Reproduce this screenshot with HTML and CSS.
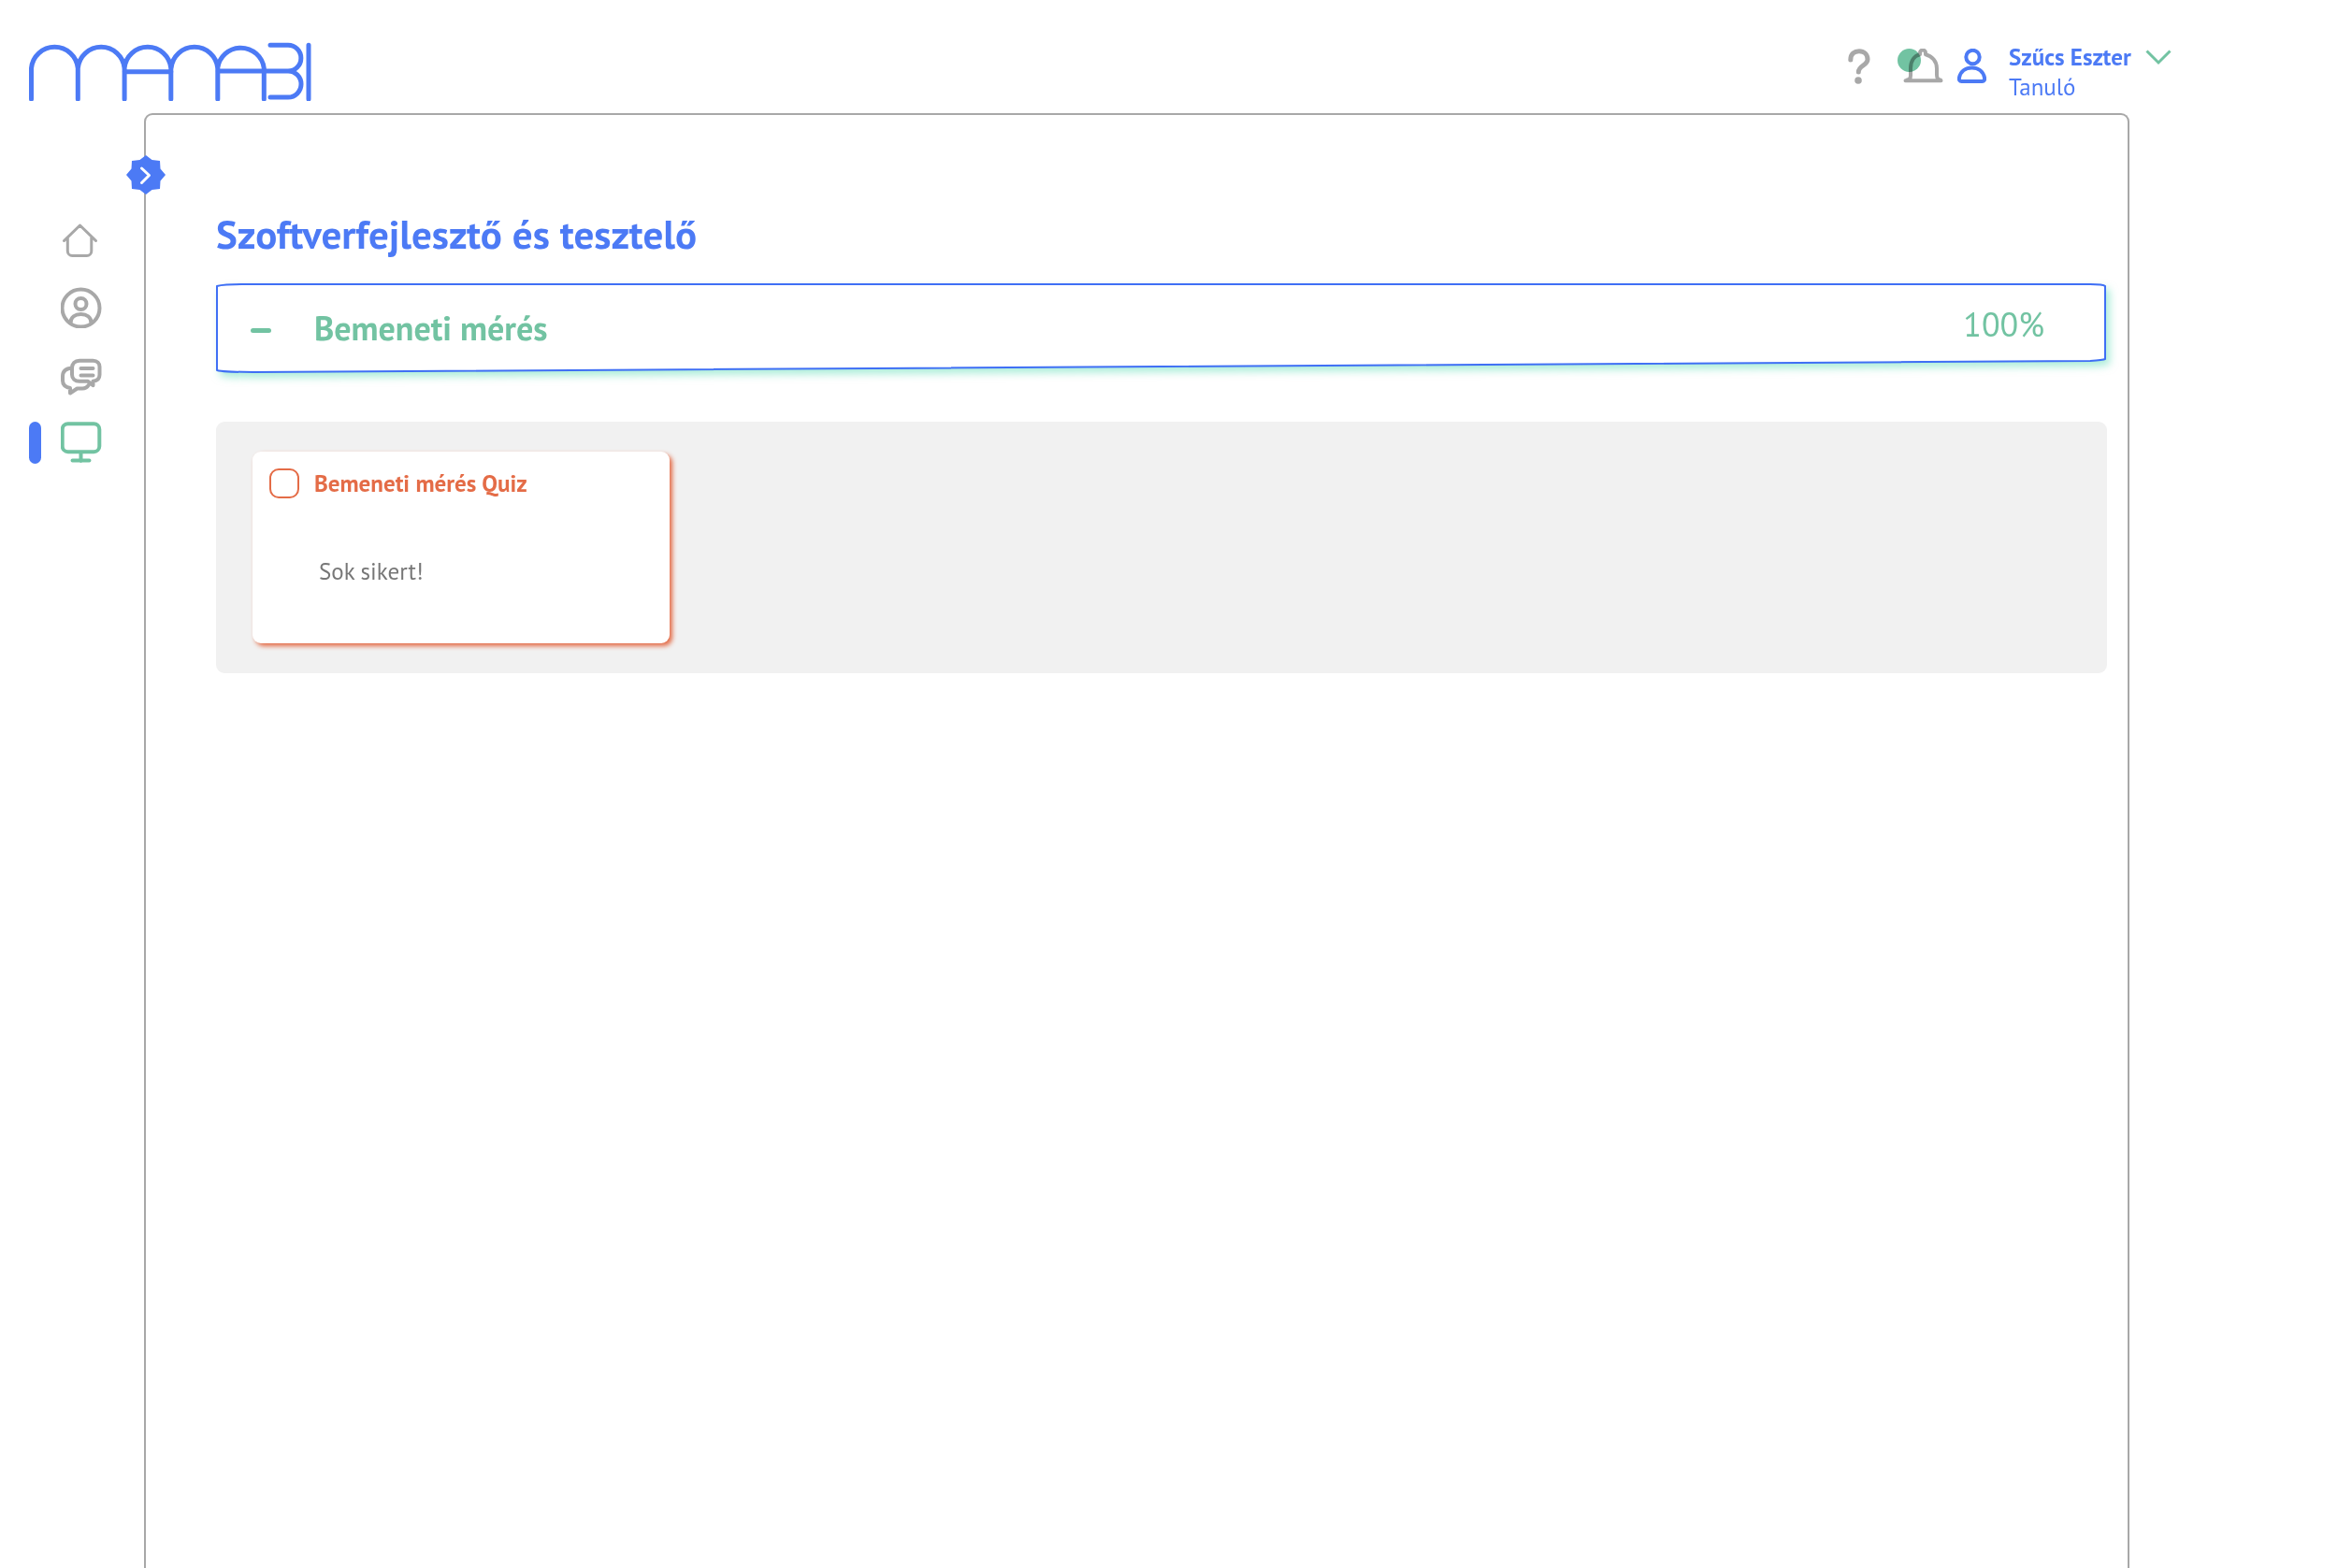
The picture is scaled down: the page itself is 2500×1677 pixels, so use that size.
FILE: index.html
```html
<!DOCTYPE html>
<html lang="hu">
<head>
    <meta charset="UTF-8">
    <meta name="viewport" content="width=device-width, initial-scale=1.0">
    <title>MAMABI</title>
    <link rel="stylesheet" href="styles.css">
</head>
<body>
    <header class="header">
        <a href="#" class="logo" aria-label="MAMABI">
            <svg width="302" height="63" viewBox="31 46 302 63">
                <path d="M33.5 107V74a25 25 0 0 1 49.8 0v33M83.3 74a25 25 0 0 1 49.8 0v33M133 74a25 25 0 0 1 49.8 0v33M183 74a25 25 0 0 1 49.8 0v33M232.7 74a25 25 0 0 1 49.6 0v33M133 77.7h50M232.7 77H308M289 49.3h19a13.8 13.8 0 0 1 0 27.7a14 14 0 0 1 0 28h-19M330 49.3V107"/>
            </svg>
        </a>
        <div class="tools">
            <button type="button" class="icon-button" aria-label="Segítség">
                <svg width="24" height="38" viewBox="0 0 24 38" class="help-icon">
                    <path d="M2.8 12C2.8 5.5 7 2.8 12 2.8S21 6.2 21 11.5C21 18 11.3 18 11.3 25"/>
                    <circle cx="11" cy="34" r="3.8"/>
                </svg>
            </button>
            <button type="button" class="icon-button bell" aria-label="Értesítések">
                <svg width="49" height="37" viewBox="0 0 49 37">
                    <path d="M8.500 34.300h38M10 33.500c3 0 4-2 4-5V21c0-8 4-13.500 10-14.800V4.500a3 3 0 0 1 6 0v1.700c7 1.800 12 7.500 12 15V28c0 3 1 5.500 4 5.500"/>
                    <circle cx="12.500" cy="12.500" r="12.500"/>
                </svg>
            </button>
            <button type="button" class="user">
                <svg width="31" height="37" viewBox="0 0 31 37" class="user-icon">
                    <circle cx="16.500" cy="9" r="7.200"/>
                    <path d="M4.500 35h22c2 0 3-1.500 2.500-4C27.500 24 22 20.500 15.500 20.500S3.500 24 2 31c-.5 2.500.5 4 2.500 4z"/>
                </svg>
                <span class="user-text">
                    <strong>Szűcs Eszter</strong>
                    <span>Tanuló</span>
                </span>
                <svg width="28" height="17" viewBox="0 0 28 17" class="arrow-icon">
                    <path d="M1.500 1.500 14 14 26.500 1.500"/>
                </svg>
            </button>
        </div>
    </header>
    <div class="layout">
        <nav class="sidebar">
            <a href="#" aria-label="Kezdőlap">
                <svg width="44" height="44" viewBox="0 -1 44 44" class="thin">
                    <path d="M3.500 21.500 20.500 5 37.500 21.500M7.300 18v14.500a5 5 0 0 0 5 5h15.500a5 5 0 0 0 5-5V18"/>
                </svg>
            </a>
            <a href="#" aria-label="Profil">
                <svg width="44" height="44" viewBox="0 -1 44 44">
                    <circle cx="21.500" cy="21.500" r="20"/>
                    <circle cx="21.500" cy="17" r="6"/>
                    <path d="M10.500 37.500c0-6.500 5-9.500 11-9.500s11 3 11 9.500"/>
                </svg>
            </a>
            <a href="#" aria-label="Üzenetek">
                <svg width="44" height="44" viewBox="0 -2 44 44">
                    <path d="M20 4.800h14.500c4.500 0 7 3 7 6.500v8.500c0 4-2.500 6.500-7 7v4.500l-5.500-4.500H20c-5 0-8-3-8-7v-7c0-5 3-8 8-8z"/>
                    <path d="M12 12.500c-6 .5-10 3.500-10 9V26c0 5 3 7 8 8v5.500l7.500-5h5.500c3.500 0 5.500-1.500 7-4M21.500 13h13M21.500 20.500h13"/>
                </svg>
            </a>
            <a href="#" class="active" aria-label="Kurzusok" aria-current="page">
                <svg width="44" height="44" viewBox="0 0 44 44">
                    <rect x="1.700" y="2.200" width="39.600" height="30" rx="6"/>
                    <path d="M21.500 33v9M12.500 41.500h18"/>
                </svg>
            </a>
        </nav>
        <main class="content">
            <button type="button" class="toggle" aria-label="Menü kinyitása">
                <svg width="42" height="42" viewBox="0 0 42 42">
                    <polygon points="21,0 27.500,5 36,6 36.500,14.500 42,21 36.500,27.500 36,36 27.500,37 21,42 14.500,37 6,36 5.500,27.500 0,21 5.500,14.500 6,6 14.500,5"/>
                    <path d="M16.500 14 24.500 21.500 16.500 29.500"/>
                </svg>
            </button>
            <h1>Szoftverfejlesztő és tesztelő</h1>
            <button type="button" class="module" aria-expanded="true">
                <svg class="module-frame" viewBox="0 0 2022 95" preserveAspectRatio="none">
                    <path d="M1 3Q8 1 28 1H2004Q2018 1 2020 3V81Q2018 82 2004 83L40 95Q8 95 1 93Z"/>
                </svg>
                <span class="minus"></span>
                <span class="module-title">Bemeneti mérés</span>
                <span class="percent">100%</span>
            </button>
            <section class="lessons">
                <article class="card">
                    <div class="card-head">
                        <input type="checkbox" id="quiz">
                        <label for="quiz">Bemeneti mérés Quiz</label>
                    </div>
                    <p>Sok sikert!</p>
                </article>
            </section>
        </main>
    </div>
</body>
</html>
```
FILE: styles.css
```css
* { margin: 0; padding: 0; box-sizing: border-box; }
body { font-family: "PT Sans", Lato, sans-serif; font-size: 25px; line-height: 32px; background: #fff; color: #777; min-height: 100vh; display: flex; flex-direction: column; }
button { font: inherit; color: inherit; background: none; border: none; cursor: pointer; }
svg { display: block; flex-shrink: 0; fill: none; stroke: currentColor; stroke-width: 4; stroke-linecap: round; stroke-linejoin: round; }

.header { display: flex; justify-content: space-between; align-items: flex-start; height: 121px; padding: 45px 178px 0 31px; }
.logo { color: #4c7af5; }
.logo svg { stroke-width: 5; }
.tools { display: flex; align-items: flex-start; color: #a8a8a8; }
.icon-button { margin-top: 7px; margin-right: 29px; }
.bell { margin-right: 15px; }
.help-icon { stroke-width: 5; }
.help-icon circle { fill: currentColor; stroke: none; }
.bell circle { fill: #72c3a2; stroke: none; mix-blend-mode: multiply; }
.user { display: flex; align-items: flex-start; color: #4c7af5; text-align: left; }
.user-text { display: flex; flex-direction: column; width: 146px; margin-left: 24px; white-space: nowrap; }
.user-icon { margin-top: 7px; }
.arrow-icon { margin-top: 8px; color: #72c3a2; stroke-width: 3; stroke-linecap: butt; stroke-linejoin: miter; }

.layout { flex-grow: 1; display: flex; padding-right: 223px; }
.sidebar { width: 154px; padding-top: 114px; display: flex; flex-direction: column; gap: 28px; color: #a8a8a8; }
.sidebar a { display: flex; padding-left: 65px; color: inherit; }
.sidebar .thin { stroke-width: 3; }
.sidebar .active { position: relative; color: #72c3a2; }
.sidebar .active::before { content: ""; position: absolute; left: 31px; top: 0; width: 13px; height: 45px; border-radius: 7px; background: #4c7af5; }

.content { position: relative; flex-grow: 1; padding: 99px 22px 0 75px; border: 2px solid #a8a8a8; border-bottom: none; border-radius: 9px 9px 0 0; }
.toggle { position: absolute; left: -21px; top: 43px; }
.toggle polygon { fill: #4c7af5; stroke: none; }
.toggle path { stroke: #fff; stroke-width: 3; }
h1 { font-size: 43px; line-height: 56px; color: #4c7af5; }

.module { position: relative; display: flex; align-items: center; width: 100%; height: 95px; margin-top: 25px; padding: 0 67px 0 37px; font-size: 36px; line-height: 48px; color: #72c3a2; }
.module-frame { position: absolute; left: 0; top: 0; width: 100%; height: 100%; overflow: visible; fill: #fff; stroke: #3f6ff5; stroke-width: 2; filter: drop-shadow(4px 5px 4px rgba(90, 220, 180, 0.5)); }
.module-frame path { vector-effect: non-scaling-stroke; }
.minus { position: relative; width: 22px; height: 5px; margin-top: 6px; border-radius: 3px; background: currentColor; }
.module-title { position: relative; margin-left: 46px; font-weight: bold; }
.percent { position: relative; margin-left: auto; padding-bottom: 8px; }

.lessons { margin-top: 53px; padding: 32px 39px; border-radius: 9px; background: #f1f1f1; }
.card { width: 446px; height: 205px; padding: 18px; border-radius: 9px; background: #fff; box-shadow: 3px 3px 5px #e46c47; }
.card-head { display: flex; align-items: center; gap: 16px; font-weight: bold; color: #e46c47; }
.card-head input { appearance: none; width: 32px; height: 32px; border: 2px solid #e46c47; border-radius: 10px; }
.card p { margin: 62px 0 0 53px; }
```
